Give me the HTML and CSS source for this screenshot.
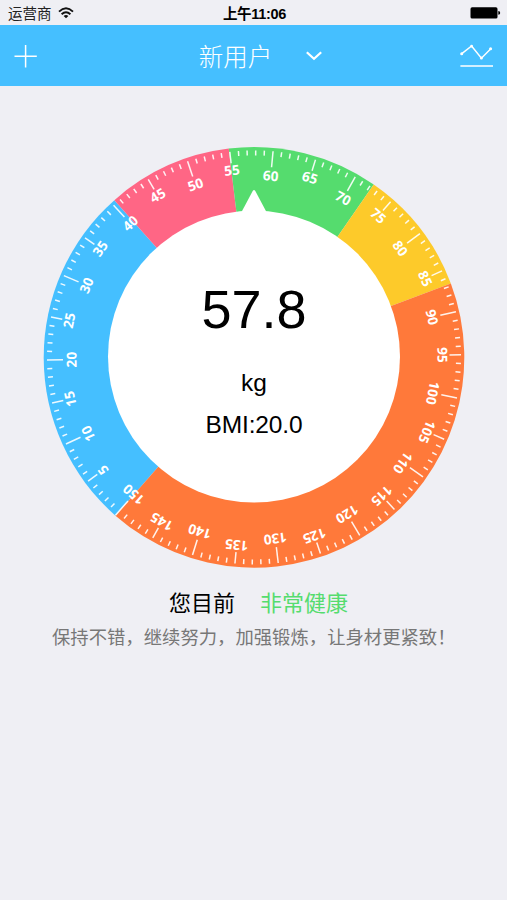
FILE: index.html
```html
<!DOCTYPE html>
<html lang="zh-CN">
<head>
<meta charset="utf-8">
<title>体重</title>
<link rel="stylesheet" href="styles.css">
</head>
<body>
<div class="status">
  <div class="carrier"><span>运营商</span>
    <svg class="wifi" width="16" height="12" viewBox="0 0 16 12"><path d="M1 4.6Q8-2 15 4.6M3.6 7.2Q8 3.2 12.4 7.2" fill="none" stroke="#111" stroke-width="1.9"/><path d="M5.6 8.9Q8 7 10.4 8.9L8 11.3Z" fill="#111"/></svg>
  </div>
  <div class="time">上午11:06</div>
  <svg class="battery" width="31" height="12" viewBox="0 0 31 12"><rect x="0.5" y="0.3" width="27" height="11.2" rx="1.6"/><path d="M28.3 4Q30.2 4.3 30.2 5.9T28.3 7.8Z"/></svg>
</div>
<header class="nav">
  <svg class="plus" width="24" height="24" viewBox="0 0 24 24"><path d="M11.6 1V23.4M0.5 12.2H22.8"/></svg>
  <div class="user"><span>新用户</span><svg width="18" height="12" viewBox="0 0 18 12"><path d="M1.8 2.2L9 8.8L16.2 2.2"/></svg></div>
  <svg class="chart" width="34" height="26" viewBox="0 0 34 26"><path d="M2.5 10.8L12.6 3L22.4 15.2L31.8 5.7M1.4 22.9H34"/><circle cx="2.7" cy="10.8" r="1.5"/><circle cx="12.6" cy="3.2" r="1.4"/><circle cx="22.4" cy="15" r="1.5"/><circle cx="31.6" cy="5.7" r="1.5"/></svg>
</header>
<main>
  <div class="dial">
    <svg class="ring" width="422" height="422" viewBox="-211 -211.4 422 422">
      <g id="zones"></g>
      <g id="ticks"></g>
      <circle class="hub" cx="0" cy="-0.8" r="146"/>
      <path class="hub" d="M-13 -144.5L-1.3 -166.5Q0 -168.5 1.3 -166.5L13 -144.5Z"/>
    </svg>
    <div class="reading">
      <div class="weight">57.8</div>
      <div class="unit">kg</div>
      <div class="bmi">BMI:20.0</div>
    </div>
  </div>
  <div class="verdict"><span>您目前</span><span class="good">非常健康</span></div>
  <p class="advice">保持不错，继续努力，加强锻炼，让身材更紧致！</p>
</main>
<script src="dial.js"></script>
</body>
</html>
```

FILE: styles.css
```css
* { box-sizing: border-box; }
body {
  margin: 0;
  width: 507px;
  height: 900px;
  overflow: hidden;
  background: #efeff4;
  color: #000;
  font-family: "Liberation Sans", "Noto Sans CJK SC", sans-serif;
}
.status {
  display: grid;
  grid-template-columns: 1fr auto 1fr;
  align-items: center;
  height: 25px;
  padding: 3px 6px 0 8px;
}
.carrier {
  display: flex;
  align-items: center;
  gap: 6px;
  font-size: 14.5px;
  line-height: 20px;
  color: #222;
}
.wifi { margin-top: -3px; }
.time {
  font-size: 14.5px;
  line-height: 20px;
  font-weight: 700;
  letter-spacing: -0.3px;
}
.battery { justify-self: end; margin-top: -2px; }
.nav {
  display: grid;
  grid-template-columns: 1fr auto 1fr;
  align-items: center;
  height: 61px;
  padding: 0 14px;
  background: #45bfff;
}
.nav svg { fill: none; stroke: #fff; stroke-width: 1.5; }
.user {
  display: flex;
  align-items: center;
  gap: 33px;
  margin-left: 15px;
  font-size: 24.5px;
  line-height: 36px;
  font-weight: 300;
  color: #fff;
}
.user span { padding-top: 4px; }
.nav .user svg { stroke-width: 2.2; }
.nav .chart { justify-self: end; }
.nav .chart circle { fill: #fff; stroke: none; }
.dial {
  display: grid;
  width: 422px;
  height: 422px;
  margin: 60px 0 0 43px;
}
.dial > * { grid-area: 1 / 1; }
.hub { fill: #fff; }
#ticks line { stroke: #fff; stroke-width: 1.5; stroke-opacity: 0.9; }
#ticks text {
  fill: #fff;
  font: 700 13.6px "Open Sans", "Noto Sans", sans-serif;
  text-anchor: middle;
}
.reading { z-index: 1; text-align: center; padding-top: 130px; }
.weight { font-size: 54px; line-height: 66px; }
.unit { font-size: 24.5px; line-height: 30px; margin-top: 26px; }
.bmi { font-size: 24.5px; line-height: 30px; margin-top: 12px; letter-spacing: -0.15px; }
.verdict {
  display: flex;
  justify-content: center;
  gap: 25px;
  margin-top: 20px;
  margin-left: 10px;
  font-size: 22px;
  line-height: 32px;
}
.good { color: #55dc6e; }
.advice {
  margin: 4px 0 0 52px;
  font-size: 18.35px;
  line-height: 28px;
  white-space: nowrap;
  color: #777;
}
```

FILE: dial.js
```js
const NS = 'http://www.w3.org/2000/svg';
const CURRENT = 57.8;
const DEG_PER_KG = 2.4;
const R = 210.3;

const zones = [
  [-138.8, -41.6, '#45bfff'],
  [-41.6, -6.9, '#ff6685'],
  [-6.9, 34.7, '#55dc6e'],
  [34.7, 69.4, '#fdca2a'],
  [69.4, 221.2, '#ff793a']
];

function add(parent, name, attrs, text) {
  const el = document.createElementNS(NS, name);
  for (const key in attrs) el.setAttribute(key, attrs[key]);
  if (text !== undefined) el.textContent = text;
  parent.appendChild(el);
}

function point(deg) {
  const a = deg * Math.PI / 180;
  return (R * Math.sin(a)).toFixed(2) + ' ' + (-R * Math.cos(a)).toFixed(2);
}

const zoneLayer = document.getElementById('zones');
for (const [from, to, fill] of zones) {
  add(zoneLayer, 'path', {
    d: `M0 0L${point(from)}A${R} ${R} 0 0 1 ${point(to)}Z`,
    fill
  });
}

const tickLayer = document.getElementById('ticks');
for (let kg = 1; kg <= 150; kg++) {
  const rotate = `rotate(${((kg - CURRENT) * DEG_PER_KG).toFixed(2)})`;
  const inner = kg % 10 === 0 ? -191 : kg % 5 === 0 ? -195.5 : -202;
  add(tickLayer, 'line', { x1: 0, x2: 0, y1: kg === 150 ? -210 : -207, y2: inner, transform: rotate });
  if (kg % 5 === 0) {
    add(tickLayer, 'text', { x: 0, y: kg % 10 === 0 ? -177.5 : -183.5, transform: rotate }, kg);
  }
}
```
